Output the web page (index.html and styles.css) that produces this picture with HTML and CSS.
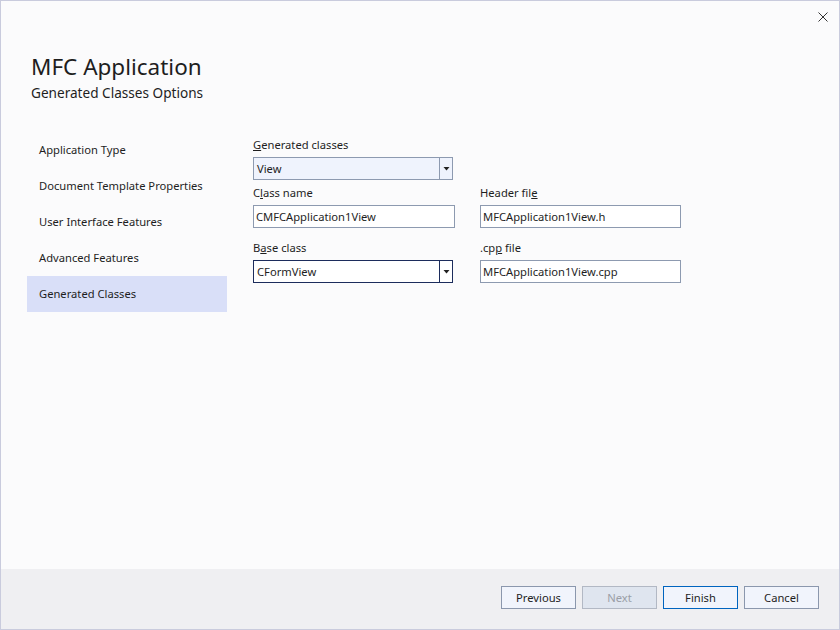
FILE: index.html
```html
<!DOCTYPE html>
<html>
<head>
<meta charset="utf-8">
<link rel="stylesheet" href="styles.css">
</head>
<body>
<div class="window">
  <div class="topbar">
    <button class="close" aria-label="Close">
      <svg width="10" height="10" viewBox="0 0 10 10"><path d="M0.5 0.5 L9.5 9.5 M9.5 0.5 L0.5 9.5" stroke="#333" stroke-width="1" fill="none"/></svg>
    </button>
  </div>
  <div class="content">
    <div class="heading">
      <div class="title">MFC Application</div>
      <div class="subtitle">Generated Classes Options</div>
    </div>
    <div class="body">
      <ul class="nav">
        <li>Application Type</li>
        <li>Document Template Properties</li>
        <li>User Interface Features</li>
        <li>Advanced Features</li>
        <li class="active">Generated Classes</li>
      </ul>
      <div class="form">
        <div class="field">
          <div class="label"><u>G</u>enerated classes</div>
          <div class="combo">
            <span class="value">View</span>
            <span class="arrow"><svg width="7" height="4" viewBox="0 0 7 4"><path d="M0.5 0 H6.5 L3.5 3.5 Z" fill="#222"/></svg></span>
          </div>
        </div>
        <div class="grid">
          <div class="field">
            <div class="label">C<u>l</u>ass name</div>
            <div class="input wide">CMFCApplication1View</div>
          </div>
          <div class="field">
            <div class="label">Header fil<u>e</u></div>
            <div class="input">MFCApplication1View.h</div>
          </div>
          <div class="field">
            <div class="label">B<u>a</u>se class</div>
            <div class="combo focused">
              <span class="value">CFormView</span>
              <span class="arrow"><svg width="7" height="4" viewBox="0 0 7 4"><path d="M0.5 0 H6.5 L3.5 3.5 Z" fill="#222"/></svg></span>
            </div>
          </div>
          <div class="field">
            <div class="label">.cp<u>p</u> file</div>
            <div class="input cpp">MFCApplication1View.cpp</div>
          </div>
        </div>
      </div>
    </div>
  </div>
  <div class="footer">
    <button class="btn">Previous</button>
    <button class="btn disabled">Next</button>
    <button class="btn primary">Finish</button>
    <button class="btn">Cancel</button>
  </div>
</div>
</body>
</html>
```
FILE: styles.css
```css
* { box-sizing: border-box; }
html, body { margin: 0; padding: 0; }
body {
  width: 840px;
  height: 630px;
  font-family: "Noto Sans", "Open Sans", sans-serif;
  color: #1e1e1e;
  background: #fbfbfc;
}
.window {
  width: 840px;
  height: 630px;
  border: 1px solid #c9cbdd;
  display: flex;
  flex-direction: column;
  background: #fbfbfc;
}
.topbar {
  height: 30px;
  display: flex;
  justify-content: flex-end;
  align-items: flex-start;
  padding-top: 11px;
  padding-right: 11px;
}
.close {
  width: 10px;
  height: 10px;
  padding: 0;
  margin: 0;
  border: 0;
  background: none;
  display: flex;
}
.content {
  flex: 1;
  padding: 0 0 0 26px;
}
.heading {
  padding-left: 4px;
  margin-top: 20px;
}
.title {
  font-size: 22.5px;
  line-height: 32px;
  color: #1e1e1e;
}
.subtitle {
  font-size: 13.6px;
  line-height: 19px;
  color: #1e1e1e;
}
.body {
  display: flex;
  margin-top: 21px;
}
.nav {
  list-style: none;
  margin: 0;
  padding: 0;
  width: 200px;
  margin-top: 9px;
}
.nav li {
  height: 36px;
  line-height: 36px;
  padding-left: 12px;
  font-size: 11.2px;
}
.nav li.active {
  background: #d9dff8;
}
.form {
  margin-left: 26px;
  margin-top: 14px;
  font-size: 11.2px;
}
.label {
  height: 16px;
  line-height: 16px;
  margin-bottom: 4px;
}
.combo {
  width: 200px;
  height: 23px;
  border: 1px solid #8d9ab0;
  background: #eff3fd;
  display: flex;
  align-items: center;
}
.combo .value {
  flex: 1;
  padding-left: 3px;
}
.combo .arrow {
  width: 13px;
  height: 100%;
  border-left: 1px solid #8d9ab0;
  display: flex;
  align-items: center;
  justify-content: center;
}
.combo.focused {
  border-color: #1c2c5c;
  background: #ffffff;
  margin-top: 1px;
}
.combo.focused .arrow {
  border-left-color: #1c2c5c;
}
.grid {
  display: grid;
  grid-template-columns: 227px 201px;
  row-gap: 12px;
  margin-top: 5px;
}
.input {
  width: 201px;
  height: 23px;
  border: 1px solid #8d9ab0;
  background: #ffffff;
  line-height: 21px;
  padding-left: 2px;
}
.input.wide {
  width: 202px;
}
.footer {
  height: 60px;
  flex-shrink: 0;
  background: #efeff2;
  display: flex;
  justify-content: flex-end;
  align-items: flex-start;
  gap: 6px;
  padding-top: 17px;
  padding-right: 20px;
}
.btn {
  width: 75px;
  height: 23px;
  border: 1px solid #8b97ad;
  background: #f1f4fc;
  font-family: "Noto Sans", "Open Sans", sans-serif;
  font-size: 11.2px;
  color: #1e1e1e;
  padding: 0;
}
.btn.disabled {
  background: #dfe5ef;
  border-color: #b2b8c4;
  color: #9a9ea6;
}
.btn.primary {
  border-color: #0064bf;
}
```
